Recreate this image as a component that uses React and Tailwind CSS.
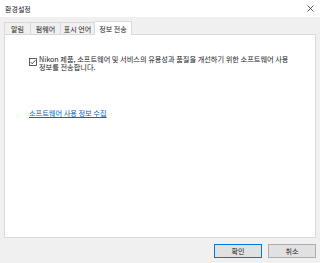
import React from "react";

export default function App() {
  const font = { fontFamily: '"Noto Sans CJK KR", "Noto Sans", sans-serif' };
  return (
    <div className="w-[320px] h-[263px] bg-[#f0f0f0] flex flex-col text-[7px] leading-[8px] text-[#1a1a1a] overflow-hidden" style={font}>
      <div className="h-[17px] bg-white flex items-center justify-between pl-[5px] pr-[5px] shrink-0">
        <span className="text-[7px]">환경설정</span>
        <svg width="7" height="7" viewBox="0 0 7 7" className="mr-[1px]">
          <path d="M0.5 0.5 L6.5 6.5 M6.5 0.5 L0.5 6.5" stroke="#333" strokeWidth="0.8" />
        </svg>
      </div>
      <div className="flex flex-col px-[4px] pt-[4px] shrink-0">
        <div className="flex items-end h-[13px]">
          <div className="w-[27px] h-[12px] border border-b-0 border-[#d9d9d9] bg-[#f0f0f0] flex items-center justify-center">알림</div>
          <div className="w-[30px] h-[12px] border border-b-0 border-l-0 border-[#d9d9d9] bg-[#f0f0f0] flex items-center justify-center">펌웨어</div>
          <div className="w-[34px] h-[12px] border border-b-0 border-l-0 border-[#d9d9d9] bg-[#f0f0f0] flex items-center justify-center">표시 언어</div>
          <div className="w-[37px] h-[14px] -mb-[1px] border border-b-0 border-l-0 border-[#d9d9d9] bg-white flex items-center justify-center relative z-10">정보 전송</div>
        </div>
        <div className="h-[204px] border border-[#d9d9d9] bg-white flex flex-col pl-[24px] pt-[20px]">
          <div className="flex items-start">
            <svg width="8" height="8" viewBox="0 0 8 8" className="mt-[3px] mr-[2px] shrink-0">
              <rect x="0.5" y="0.5" width="7" height="7" fill="white" stroke="#333" strokeWidth="0.8" />
              <path d="M1.6 4.1 L3.2 5.7 L6.4 2.2" fill="none" stroke="#333" strokeWidth="0.9" />
            </svg>
            <p className="w-[258px] text-[7.2px] leading-[8px] break-keep">
              Nikon 제품, 소프트웨어 및 서비스의 유용성과 품질을 개선하기 위한 소프트웨어 사용 정보를 전송합니다.
            </p>
          </div>
          <a className="mt-[38px] text-[7.2px] text-[#0066cc] underline self-start">소프트웨어 사용 정보 수집</a>
        </div>
      </div>
      <div className="flex justify-end gap-[6px] pr-[4px] pt-[6px]">
        <button className="w-[48px] h-[14px] bg-[#e1e1e1] border border-[#0078d7] flex items-center justify-center text-[7px]">확인</button>
        <button className="w-[48px] h-[14px] bg-[#e1e1e1] border border-[#adadad] flex items-center justify-center text-[7px]">취소</button>
      </div>
    </div>
  );
}
